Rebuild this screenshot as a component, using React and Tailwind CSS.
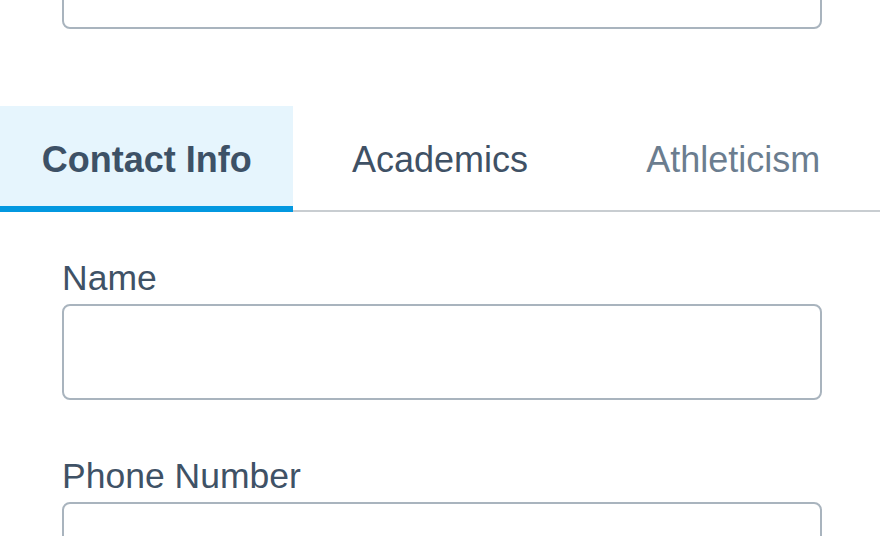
export default function App() {
  const label = "block text-[35.5px] leading-[40px] text-[#3f5266]";
  const input = "block w-[760px] h-[96px] border-2 border-[#a9b4be] rounded-[8px] bg-white";
  return (
    <div className="w-[880px] h-[536px] overflow-hidden bg-white" style={{ fontFamily: '"Liberation Sans", Arial, sans-serif' }}>
      <div className="pl-[62px] mt-[-67px]">
        <div className={input}></div>
      </div>
      <div className="mt-[77px] flex border-b-2 border-[#c8cdd1]">
        <div className="flex-1 h-[106px] -mb-[2px] bg-[#e6f5fd] border-b-[6px] border-[#0398e0] pt-[34px] text-center text-[36px] leading-[40px] font-bold text-[#3d5166]">
          Contact Info
        </div>
        <div className="flex-1 h-[104px] pt-[34px] text-center text-[36px] leading-[40px] text-[#3f5165]">
          Academics
        </div>
        <div className="flex-1 h-[104px] pt-[34px] text-center text-[36px] leading-[40px] text-[#6b7d8f]">
          Athleticism
        </div>
      </div>
      <div className="pl-[62px] pt-[46px] flex flex-col">
        <label className={label}>Name</label>
        <div className={"mt-[6px] " + input}></div>
        <label className={"mt-[56px] " + label}>Phone Number</label>
        <div className={"mt-[6px] " + input}></div>
      </div>
    </div>
  );
}
